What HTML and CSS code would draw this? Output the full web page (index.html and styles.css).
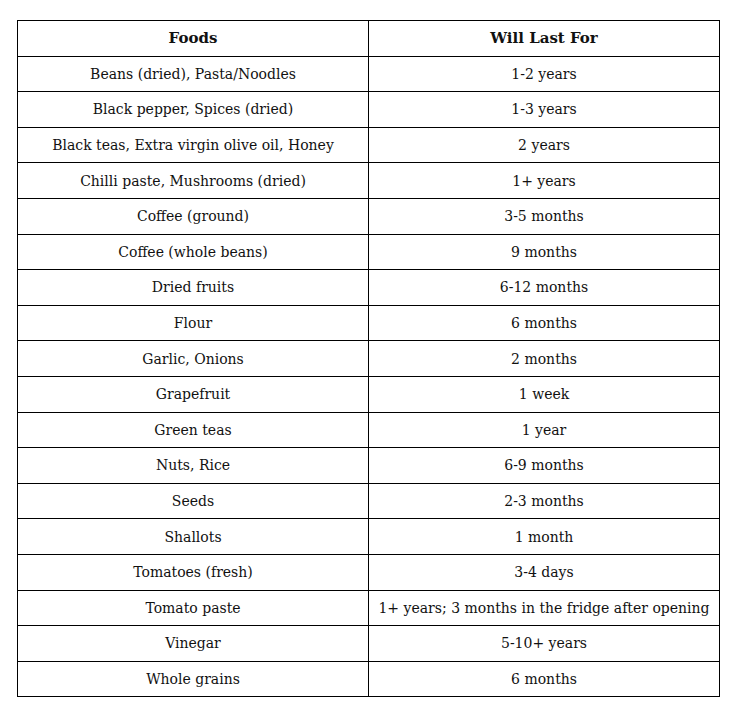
FILE: index.html
```html
<!DOCTYPE html>
<html lang="en">
<head>
<meta charset="utf-8">
<title>Food shelf life</title>
<link rel="stylesheet" href="styles.css">
</head>
<body>
<table class="shelf">
  <thead>
    <tr><th>Foods</th><th>Will Last For</th></tr>
  </thead>
  <tbody>
    <tr><td>Beans (dried), Pasta/Noodles</td><td>1-2 years</td></tr>
    <tr><td>Black pepper, Spices (dried)</td><td>1-3 years</td></tr>
    <tr><td>Black teas, Extra virgin olive oil, Honey</td><td>2 years</td></tr>
    <tr><td>Chilli paste, Mushrooms (dried)</td><td>1+ years</td></tr>
    <tr><td>Coffee (ground)</td><td>3-5 months</td></tr>
    <tr><td>Coffee (whole beans)</td><td>9 months</td></tr>
    <tr><td>Dried fruits</td><td>6-12 months</td></tr>
    <tr><td>Flour</td><td>6 months</td></tr>
    <tr><td>Garlic, Onions</td><td>2 months</td></tr>
    <tr><td>Grapefruit</td><td>1 week</td></tr>
    <tr><td>Green teas</td><td>1 year</td></tr>
    <tr><td>Nuts, Rice</td><td>6-9 months</td></tr>
    <tr><td>Seeds</td><td>2-3 months</td></tr>
    <tr><td>Shallots</td><td>1 month</td></tr>
    <tr><td>Tomatoes (fresh)</td><td>3-4 days</td></tr>
    <tr><td>Tomato paste</td><td>1+ years; 3 months in the fridge after opening</td></tr>
    <tr><td>Vinegar</td><td>5-10+ years</td></tr>
    <tr><td>Whole grains</td><td>6 months</td></tr>
  </tbody>
</table>
</body>
</html>
```

FILE: styles.css
```css
html, body {
  margin: 0;
  padding: 0;
  background: #ffffff;
}

body {
  padding: 20px 0 0 17px;
  font-family: "DejaVu Serif", "Liberation Serif", serif;
  font-size: 14px;
  color: #111111;
}

.shelf {
  border-collapse: collapse;
  width: 703px;
  table-layout: fixed;
}

.shelf tr {
  height: 35.6px;
}

.shelf th,
.shelf td {
  border: 1px solid #000000;
  padding: 0 4px;
  text-align: center;
  vertical-align: middle;
  line-height: 18px;
}

.shelf th {
  font-weight: bold;
  font-size: 15px;
}
```
